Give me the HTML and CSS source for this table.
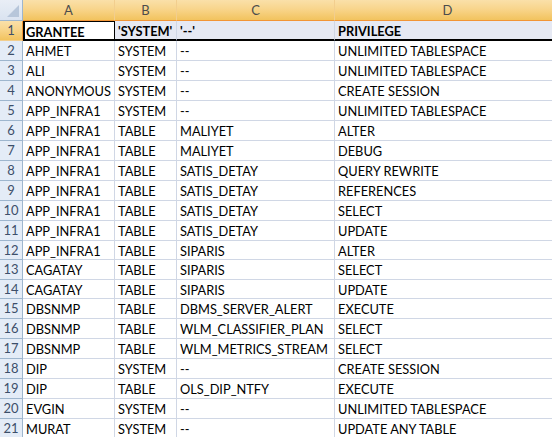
FILE: index.html
```html
<!DOCTYPE html>
<html>
<head>
<meta charset="utf-8">
<link rel="stylesheet" href="styles.css">
</head>
<body>
<div class="sheet">
  <div class="corner"><svg width="22" height="20" viewBox="0 0 22 20"><polygon points="19,5 19,17 7,17" fill="#B7C6DA"/></svg></div>
  <div class="ch">A</div><div class="ch">B</div><div class="ch">C</div><div class="ch last">D</div>

  <div class="rh sel">1</div>
  <div class="c hd active">GRANTEE</div><div class="c hd fill">'SYSTEM'</div><div class="c hd fill">'--'</div><div class="c hd fill last">PRIVILEGE</div>

  <div class="rh">2</div><div class="c">AHMET</div><div class="c">SYSTEM</div><div class="c">--</div><div class="c last">UNLIMITED TABLESPACE</div>
  <div class="rh">3</div><div class="c">ALI</div><div class="c">SYSTEM</div><div class="c">--</div><div class="c last">UNLIMITED TABLESPACE</div>
  <div class="rh">4</div><div class="c">ANONYMOUS</div><div class="c">SYSTEM</div><div class="c">--</div><div class="c last">CREATE SESSION</div>
  <div class="rh">5</div><div class="c">APP_INFRA1</div><div class="c">SYSTEM</div><div class="c">--</div><div class="c last">UNLIMITED TABLESPACE</div>
  <div class="rh">6</div><div class="c">APP_INFRA1</div><div class="c">TABLE</div><div class="c">MALIYET</div><div class="c last">ALTER</div>
  <div class="rh">7</div><div class="c">APP_INFRA1</div><div class="c">TABLE</div><div class="c">MALIYET</div><div class="c last">DEBUG</div>
  <div class="rh">8</div><div class="c">APP_INFRA1</div><div class="c">TABLE</div><div class="c">SATIS_DETAY</div><div class="c last">QUERY REWRITE</div>
  <div class="rh">9</div><div class="c">APP_INFRA1</div><div class="c">TABLE</div><div class="c">SATIS_DETAY</div><div class="c last">REFERENCES</div>
  <div class="rh">10</div><div class="c">APP_INFRA1</div><div class="c">TABLE</div><div class="c">SATIS_DETAY</div><div class="c last">SELECT</div>
  <div class="rh">11</div><div class="c">APP_INFRA1</div><div class="c">TABLE</div><div class="c">SATIS_DETAY</div><div class="c last">UPDATE</div>
  <div class="rh">12</div><div class="c">APP_INFRA1</div><div class="c">TABLE</div><div class="c">SIPARIS</div><div class="c last">ALTER</div>
  <div class="rh">13</div><div class="c">CAGATAY</div><div class="c">TABLE</div><div class="c">SIPARIS</div><div class="c last">SELECT</div>
  <div class="rh">14</div><div class="c">CAGATAY</div><div class="c">TABLE</div><div class="c">SIPARIS</div><div class="c last">UPDATE</div>
  <div class="rh">15</div><div class="c">DBSNMP</div><div class="c">TABLE</div><div class="c">DBMS_SERVER_ALERT</div><div class="c last">EXECUTE</div>
  <div class="rh">16</div><div class="c">DBSNMP</div><div class="c">TABLE</div><div class="c">WLM_CLASSIFIER_PLAN</div><div class="c last">SELECT</div>
  <div class="rh">17</div><div class="c">DBSNMP</div><div class="c">TABLE</div><div class="c">WLM_METRICS_STREAM</div><div class="c last">SELECT</div>
  <div class="rh">18</div><div class="c">DIP</div><div class="c">SYSTEM</div><div class="c">--</div><div class="c last">CREATE SESSION</div>
  <div class="rh">19</div><div class="c">DIP</div><div class="c">TABLE</div><div class="c">OLS_DIP_NTFY</div><div class="c last">EXECUTE</div>
  <div class="rh">20</div><div class="c">EVGIN</div><div class="c">SYSTEM</div><div class="c">--</div><div class="c last">UNLIMITED TABLESPACE</div>
  <div class="rh">21</div><div class="c">MURAT</div><div class="c">SYSTEM</div><div class="c">--</div><div class="c last">UPDATE ANY TABLE</div>
</div>
</body>
</html>
```
FILE: styles.css
```css
html, body {
  margin: 0;
  padding: 0;
  background: #ffffff;
  overflow: hidden;
}
.sheet {
  display: grid;
  grid-template-columns: 23px 92px 62px 158px 226px;
  grid-template-rows: 21px repeat(11, 20px) 19px 20px 19px repeat(7, 20px);
  font-family: Lato, "Open Sans", sans-serif;
  font-size: 12.8px;
  color: #000;
  width: 561px;
}
.corner {
  background: linear-gradient(#E9EEF6, #DAE3F0);
  border-right: 1px solid #9EB6CE;
  border-bottom: 1px solid #9EB6CE;
  box-sizing: border-box;
}
.corner svg { display: block; }
.ch {
  box-sizing: border-box;
  background: linear-gradient(#FAE0A9 0%, #F8D58C 45%, #F2C35E 100%);
  border-right: 1px solid #F2CE8E;
  border-bottom: 1px solid #F29536;
  text-align: center;
  color: #4C4C4C;
  line-height: 20px;
  font-size: 13px;
}
.rh {
  box-sizing: border-box;
  background: #E4ECF7;
  border-right: 1px solid #9EB6CE;
  border-bottom: 1px solid #9EB6CE;
  text-align: center;
  color: #3D4F6A;
  line-height: 19px;
  font-size: 13px;
}
.rh.sel {
  background: linear-gradient(#FAE0A9 0%, #F8D58C 45%, #F2C35E 100%);
  border-right: 1px solid #F29536;
  border-bottom-color: #F2CE8E;
}
.c {
  box-sizing: border-box;
  border-right: 1px solid #D0D7E5;
  border-bottom: 1px solid #D0D7E5;
  padding: 0 0 0 3px;
  line-height: 20px;
  white-space: nowrap;
  overflow: hidden;
}
.c.last { border-right: none; }
.hd {
  font-weight: bold;
  border-bottom: 2px solid #000;
  line-height: 20px;
}
.hd.fill { background: #E6E9F3; }
.active {
  border: 1px solid #000;
  border-bottom: 2px solid #000;
  border-left-width: 2px;
  padding-left: 1px;
}
```
